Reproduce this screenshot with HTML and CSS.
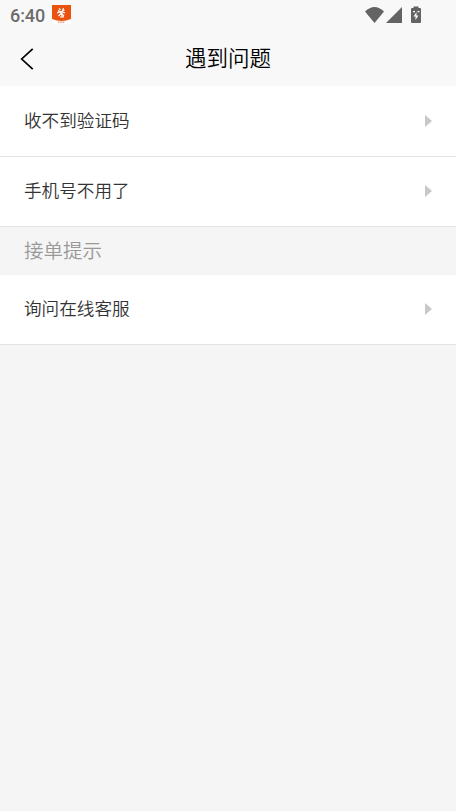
FILE: index.html
```html
<!DOCTYPE html>
<html lang="zh-CN">
<head>
<meta charset="utf-8">
<title>遇到问题</title>
<link rel="stylesheet" href="styles.css">
</head>
<body>
<div class="status">
  <span class="time">6:40</span>
  <svg class="app" width="19" height="19" viewBox="0 0 19 19"><path d="M0 0h19v19H0z" fill="#fff"/><path d="M0 0h19v14Q9.500 18 0 14z" fill="#e9530e"/><path d="M7 3.500l1.500 1.500M11.500 3l-1 3 2-1M5 8l4-1.500L13 8M6 5.500L9.500 8 6.500 11M9 8l3 3M8 12h4M10 8v4" stroke="#fff" stroke-width="1.200" fill="none"/><path d="M6 17.100h7" stroke="#ee8b63" stroke-width="1.300" stroke-dasharray="1.500 .7"/></svg>
  <svg class="sys" width="57" height="18" viewBox="0 0 57 18"><g fill="#636363"><path d="M0 4.500Q9.500-4.500 19 4.500L9.500 16z"/><path d="M37 0v16H21z"/><path d="M48.500 1V-.5h5V1H55q1 0 1 1v13q0 1-1 1h-8q-1 0-1-1V2q0-1 1-1z"/></g><path d="M51.500 5l-3 4.500h2V13l3-4.500h-2zM48 4h2v1.200h-2zM52.500 4h2v1.200h-2z" fill="#f8f8f8"/></svg>
</div>
<header class="nav">
  <svg class="back" width="14" height="22" viewBox="0 0 14 22"><path d="M12.700 .8L1.700 11l11 10.200" fill="none" stroke="#000" stroke-width="1.700"/></svg>
  <h1>遇到问题</h1>
</header>
<main>
  <div class="row"><span>收不到验证码</span><i class="arrow"></i></div>
  <div class="row second"><span>手机号不用了</span><i class="arrow"></i></div>
  <div class="hint">接单提示</div>
  <div class="row last"><span>询问在线客服</span><i class="arrow"></i></div>
</main>
</body>
</html>
```
FILE: styles.css
```css
* { box-sizing: border-box; }
body { margin: 0; min-height: 811px; background: #f5f5f5; font-family: "Noto Sans CJK SC", sans-serif; font-weight: 350; color: #333; }
.status { height: 30px; background: #f8f8f8; display: flex; padding: 5px 34px 0 10px; }
.time { font: 500 18px/21px Roboto, sans-serif; color: #6c6c6c; width: 42px; letter-spacing: -.1px; }
.sys { margin: 2px 0 0 auto; overflow: visible; }
.nav { height: 56px; background: #f8f8f8; display: grid; grid-template-columns: 60px 1fr 60px; align-items: center; }
.back { margin: 1px 0 0 20px; }
h1 { margin: 0; padding-bottom: 2px; text-align: center; font-size: 21.500px; font-weight: 350; line-height: 32px; color: #000; }
.row { height: 71px; background: #fff; border-bottom: 1px solid #e2e2e2; padding: 0 24px; display: flex; align-items: center; justify-content: space-between; font-size: 17.600px; }
.row span { padding-bottom: 3px; }
.second, .last { height: 70px; padding-bottom: 1px; }
.arrow { border: 6px solid transparent; border-left: 7px solid #c8c8c8; border-right: 0; }
.hint { height: 48px; padding-left: 24px; font-size: 19.500px; line-height: 45px; color: #999; }
```
